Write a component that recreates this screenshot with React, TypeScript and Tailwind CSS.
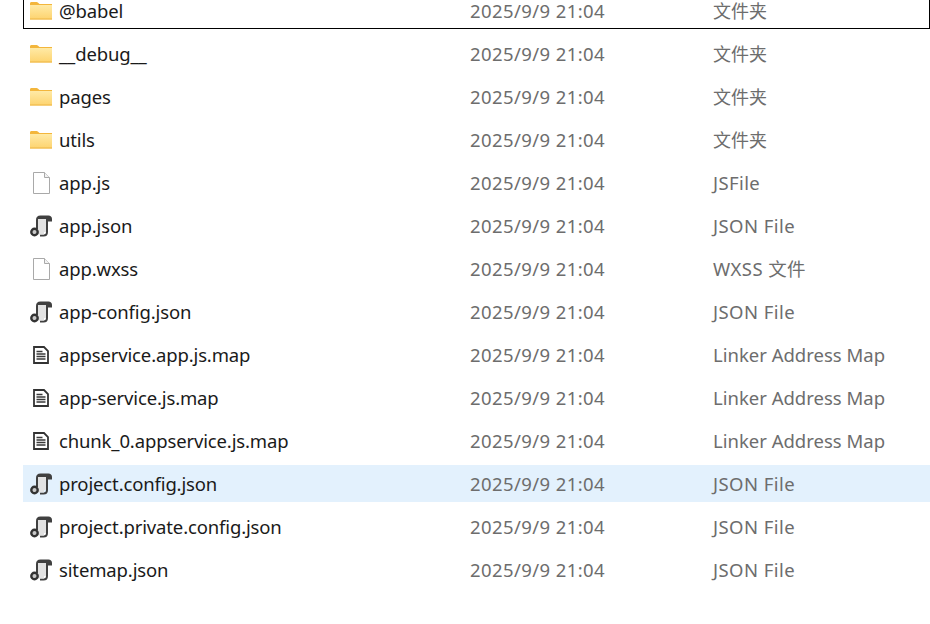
const files = [
  { name: '@babel', type: '文件夹', icon: 'folder', outlined: true },
  { name: '__debug__', type: '文件夹', icon: 'folder' },
  { name: 'pages', type: '文件夹', icon: 'folder' },
  { name: 'utils', type: '文件夹', icon: 'folder' },
  { name: 'app.js', type: 'JSFile', icon: 'blank' },
  { name: 'app.json', type: 'JSON File', icon: 'json' },
  { name: 'app.wxss', type: 'WXSS 文件', icon: 'blank' },
  { name: 'app-config.json', type: 'JSON File', icon: 'json' },
  { name: 'appservice.app.js.map', type: 'Linker Address Map', icon: 'map' },
  { name: 'app-service.js.map', type: 'Linker Address Map', icon: 'map' },
  { name: 'chunk_0.appservice.js.map', type: 'Linker Address Map', icon: 'map' },
  { name: 'project.config.json', type: 'JSON File', icon: 'json', selected: true },
  { name: 'project.private.config.json', type: 'JSON File', icon: 'json' },
  { name: 'sitemap.json', type: 'JSON File', icon: 'json' },
];

const typeStyles: Record<string, string> = {
  folder: 'pt-[2px] text-[18px]',
  map: '',
  json: 'tracking-[0.45px]',
  blank: 'tracking-[0.4px]',
};

function FolderIcon() {
  return (
    <svg width="22" height="18" viewBox="0 0 22 18">
      <path d="M0 1.500C0 .7.6 0 1.400 0h5.200c.5 0 .9.2 1.200.5L9.500 2H22v2H0z" fill="#f3b63c" />
      <rect x="0" y="3" width="22" height="14.500" fill="url(#folderFill)" />
      <rect x="0" y="16.500" width="22" height="1" fill="#eeb544" />
      <defs>
        <linearGradient id="folderFill" x1="0" y1="0" x2="0" y2="1">
          <stop offset="0" stopColor="#ffeaa6" />
          <stop offset="1" stopColor="#fdd36e" />
        </linearGradient>
      </defs>
    </svg>
  );
}

function BlankIcon() {
  return (
    <svg width="17" height="22" viewBox="0 0 17 22">
      <path d="M.5.5h11l5 5v16H.5z" fill="#fff" stroke="#a9a9a9" />
      <path d="M11.500.5v5h5" fill="#f2f2f2" stroke="#a9a9a9" />
    </svg>
  );
}

function JsonIcon() {
  return (
    <svg width="22" height="22" viewBox="0 0 22 22">
      <path d="M6 14V5C6 2 7.500 .5 10.500 .5h8c2 0 3.500 1.300 3.500 3.500v2.500h-4V17c0 3-1.500 4.500-4.500 4.500H10v-2h3.500c1.700 0 2.500-.8 2.500-2.500V4H8v10z" fill="#404040" />
      <rect x="8" y="4" width="8" height="13" fill="#e2e2e2" />
      <rect x="8" y="17" width="6" height="2.500" fill="#e2e2e2" />
      <circle cx="4.500" cy="17" r="3.200" fill="#c9c9c9" stroke="#333" strokeWidth="2.400" />
    </svg>
  );
}

function MapIcon() {
  return (
    <svg width="16" height="18" viewBox="0 0 16 18" fill="none">
      <path d="M1 1h10l4 4v12H1z" fill="#fff" stroke="#333" strokeWidth="1.800" />
      <path d="M3.500 5.500h6M3.500 8h9M3.500 10.500h9M3.500 13h9" stroke="#3a3a3a" strokeWidth="1.600" />
    </svg>
  );
}

function FileIcon({ kind }: { kind: string }) {
  if (kind === 'folder') return <FolderIcon />;
  if (kind === 'json') return <JsonIcon />;
  if (kind === 'map') return <MapIcon />;
  return <BlankIcon />;
}

export default function App() {
  return (
    <main className="h-[624px] w-[930px] overflow-hidden bg-white font-['Noto_Sans','Noto_Sans_CJK_SC',sans-serif] text-[18.5px]">
      <ul className="-mt-2 ml-[23px] flex flex-col gap-[6px]">
        {files.map((file) => (
          <li
            key={file.name}
            className={`flex h-[37px] items-center ${file.selected ? 'bg-[#e3f1fd]' : ''} ${file.outlined ? 'border border-black' : ''}`}
          >
            <span className={`flex w-[36px] shrink-0 justify-center ${file.outlined ? '-ml-px' : ''}`}>
              <FileIcon kind={file.icon} />
            </span>
            <span className="w-[411px] shrink-0 tracking-[-0.14px] text-[#1a1a1a]">{file.name}</span>
            <span className="w-[243px] shrink-0 tracking-[0.4px] text-[#6d6d6d]">2025/9/9 21:04</span>
            <span className={`text-[#6d6d6d] ${typeStyles[file.icon]}`}>{file.type}</span>
          </li>
        ))}
      </ul>
    </main>
  );
}
